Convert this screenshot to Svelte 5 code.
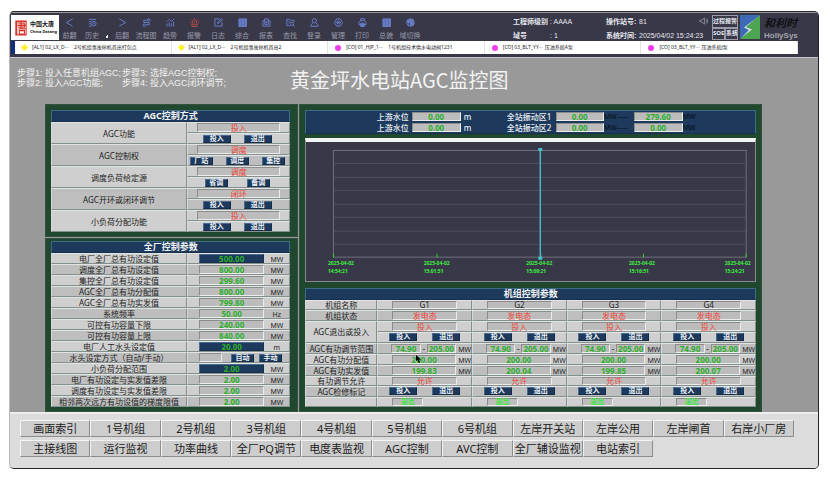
<script lang="ts">
	type Row = { label: string; value?: string; unit?: string; editable?: boolean };

	const navItems = [
		{ icon: 'prev', label: '前翻' },
		{ icon: 'history', label: '历史' },
		{ icon: 'next', label: '后翻' },
		{ icon: 'flow', label: '流程图' },
		{ icon: 'trend', label: '趋势' },
		{ icon: 'alarm', label: '报警' },
		{ icon: 'log', label: '日志' },
		{ icon: 'grid', label: '综合' },
		{ icon: 'report', label: '报表' },
		{ icon: 'find', label: '查找' },
		{ icon: 'user', label: '登录' },
		{ icon: 'manage', label: '管理' },
		{ icon: 'print', label: '打印' },
		{ icon: 'grid', label: '总貌' },
		{ icon: 'globe', label: '域切换' }
	];

	const alarms = [
		{ kind: 'diamond', tag: '[AL1] 02_LX_D···', text: '2号机组事故停机首出打包点' },
		{ kind: 'diamond', tag: '[AL1] 02_LX_D···', text: '2号机组事故停机首出2' },
		{ kind: 'dot', tag: '[CO] 01_HJP_1···', text: '1号机组技术供水电动阀1231' },
		{ kind: 'dot', tag: '[CO] 03_BLT_YY···', text: '压油系统A泵' },
		{ kind: 'dot', tag: '[CO] 03_BLT_YY···', text: '压油系统J泵' }
	];

	const modes = [
		{ label: 'AGC功能', state: '投入', actions: ['投入', '退出'] },
		{ label: 'AGC控制权', state: '调度', actions: ['厂站', '调度', '集控'] },
		{ label: '调度负荷给定源', state: '调度', actions: ['省调', '备调'] },
		{ label: 'AGC开环或闭环调节', state: '闭环', actions: ['投入', '退出'] },
		{ label: '小负荷分配功能', state: '投入', actions: ['投入', '退出'] }
	];

	const params: Row[] = [
		{ label: '电厂全厂总有功设定值', value: '500.00', unit: 'MW', editable: true },
		{ label: '调度全厂总有功设定值', value: '800.00', unit: 'MW' },
		{ label: '集控全厂总有功设定值', value: '299.60', unit: 'MW' },
		{ label: 'AGC全厂总有功分配值', value: '800.00', unit: 'MW' },
		{ label: 'AGC全厂总有功实发值', value: '799.80', unit: 'MW' },
		{ label: '系统频率', value: '50.00', unit: 'Hz' },
		{ label: '可控有功容量下限', value: '240.00', unit: 'MW' },
		{ label: '可控有功容量上限', value: '840.00', unit: 'MW' },
		{ label: '电厂人工水头设定值', value: '20.00', unit: 'm', editable: true },
		{ label: '水头设定方式（自动/手动）' },
		{ label: '小负荷分配范围', value: '2.00', unit: 'MW', editable: true },
		{ label: '电厂有功设定与实发值差限', value: '2.00', unit: 'MW' },
		{ label: '调度有功设定与实发值差限', value: '2.00', unit: 'MW' },
		{ label: '相邻两次远方有功设值的梯度限值', value: '2.00', unit: 'MW' }
	];

	const levels = [
		{ label: '上游水位', level: '0.00', zone: '全站振动区1', low: '0.00', high: '279.60' },
		{ label: '上游水位', level: '0.00', zone: '全站振动区2', low: '0.00', high: '0.00' }
	];

	const units = [
		{ name: 'G1', low: '74.90', high: '205.00', assigned: '200.00', actual: '199.83' },
		{ name: 'G2', low: '74.90', high: '205.00', assigned: '200.00', actual: '200.04' },
		{ name: 'G3', low: '74.90', high: '205.00', assigned: '200.00', actual: '199.85' },
		{ name: 'G4', low: '74.90', high: '205.00', assigned: '200.00', actual: '200.07' }
	];

	const ticks = [
		{ x: 27, label: 22, time: '14:54:21' },
		{ x: 131, label: 118, time: '15:01:51' },
		{ x: 235, label: 221, time: '15:09:21' },
		{ x: 338, label: 324, time: '15:16:51' },
		{ x: 441, label: 420, time: '15:24:21' }
	];
	const gridLines = [21, 35, 48, 62, 75, 89, 102];

	const pages = [
		['画面索引', '1号机组', '2号机组', '3号机组', '4号机组', '5号机组', '6号机组', '左岸开关站', '左岸公用', '左岸闸首', '右岸小厂房'],
		['主接线图', '运行监视', '功率曲线', '全厂PQ调节', '电度表监视', 'AGC控制', 'AVC控制', '全厂辅设监视', '电站索引']
	];
</script>

{#snippet icon(name: string)}
	<svg class="icon" class:red={name === 'alarm'} viewBox="0 0 10 10" aria-hidden="true">
		{#if name === 'prev'}
			<path d="M8.5 1 1.5 5l7 4" />
		{:else if name === 'next'}
			<path d="m1.500 1 7 4-7 4" />
		{:else if name === 'history'}
			<path d="M1 1.500h8M1 4h3M1 6.500h2.500M1 9h3" />
			<circle cx="6.500" cy="6.200" r="2.500" />
			<path d="M6.500 5v1.500h1" />
		{:else if name === 'flow'}
			<path d="M2 2.500h3.500M2 2.500v2.500h6V7.500H4.500" />
			<circle cx="7.500" cy="2.200" r="1.400" />
			<circle cx="2.500" cy="8" r="1.400" />
		{:else if name === 'trend'}
			<path d="M1 9.500V6M3.500 9.500V5M6 9.500V6M8.500 9.500V4M1 4l2.500-2.500L6 4l3-3" />
		{:else if name === 'alarm'}
			<path d="M2.500 7V4.500a2.500 2.500 0 0 1 5 0V7M1 7.500h8M2 9.500h6M5 0v1M1 1.500l1 1M9 1.500l-1 1M0 4.500h1M9 4.500h1M5 4v2" />
		{:else if name === 'log'}
			<path d="M6 1H1v8h8V5M4 6l.5-2L8.500.8l1 1L6 5.500z" />
		{:else if name === 'grid'}
			<path class="solid" d="M1 1h8.500v8.500H1z" />
			<path class="mesh" d="M3.900 1v8.500M6.700 1v8.500M1 3.900h8.500M1 6.700h8.500" />
		{:else if name === 'report'}
			<path d="M1 3v6h8V3H7.500M1 3h1.500M3 1h4v6H3zM4 3.500h2M4 5h2" />
		{:else if name === 'find'}
			<path d="M4 8.500H1v-7h3l1 1h4v2M2.500 4.500h2" />
			<circle cx="6.500" cy="6.500" r="1.900" />
			<path d="m8 8 1.500 1.500" />
		{:else if name === 'user'}
			<circle cx="5" cy="3" r="2.300" />
			<path d="M3.700 5.200 1 7.500v1.700h8V7.500L6.300 5.200" />
		{:else if name === 'manage'}
			<path d="M3 1h4l2.500 4L7 9H3L.5 5zM2.500 5h5" />
			<circle cx="5" cy="5" r="1.700" />
		{:else if name === 'print'}
			<path d="M3 3V.8h4V3M3 7.500H1V5l1.500-2h5L9 5v2.500H7" />
			<path class="solid" d="M3 6h4v3.500H3z" />
		{:else if name === 'globe'}
			<circle cx="5" cy="5" r="4.200" />
			<path d="M1 4.500h8M5 1v8M3 1.500C2 4 2.500 7 3.500 9M7 1.500C8 4 7.500 7 6.500 9" />
			<path class="solid" d="M2 2.500h5v2H2zM5 5.500h3.500v2H5z" />
		{/if}
	</svg>
{/snippet}

<div class="page">
	<div class="window">
		<header>
			<div class="top">
				<div class="brand">
					<svg viewBox="0 0 14 18" aria-hidden="true">
						<path d="M2 17V2h10M4 4h7v4H4M3 6h10M7 0v10M4 10h8M5 12h6v4H5zM1 1h12v16H1z" />
					</svg>
					<div class="brand-text">
						<strong>中国大唐</strong>
						<span>China Datang</span>
					</div>
				</div>
				<nav>
					{#each navItems as item, i}
						<button class="nav-item">
							{@render icon(item.icon)}
							<span>{item.label}</span>
						</button>
						{#if i === 1}
							<i class="corner"></i>
						{/if}
					{/each}
				</nav>
				<dl class="info level">
					<dt>工程师级别</dt>
					<dd>: AAAA</dd>
					<dt>域号</dt>
					<dd>: 1</dd>
				</dl>
				<dl class="info station">
					<dt>操作站号:</dt>
					<dd>81</dd>
					<dt>系统时间:</dt>
					<dd>2025/04/02 15:24:23</dd>
				</dl>
				<button class="speaker" aria-label="声音">
					<svg viewBox="0 0 10 8" aria-hidden="true"><path d="M1 3h2l3-2.500v7L3 5H1zM7.500 2.500c1 1 1 2 0 3M8.500 1c1.500 2 1.500 4 0 6" /></svg>
				</button>
				<div class="alarm-keys">
					<button>过程报警</button>
					<button>SOE</button>
					<button>系统</button>
				</div>
				<div class="vendor">
					<svg viewBox="0 0 20 24" preserveAspectRatio="none" aria-hidden="true">
						<path fill="#3b6bb5" d="M0 0h20L5 13l5 2-10 9z" />
						<path fill="#4da552" d="M20 0v24H0l11-10-5-2z" />
						<path fill="#d8e8e4" d="M19 1 6 12l6 2.500L1 23l8-8-5-2.500z" />
					</svg>
					<div class="vendor-text">
						<em>和利时</em>
						<strong>HollySys</strong>
					</div>
				</div>
			</div>
			<ul class="ticker">
				{#each alarms as alarm}
					<li>
						<i class={alarm.kind}></i>
						<span class="tag">{alarm.tag}</span>
						<span>{alarm.text}</span>
					</li>
				{/each}
			</ul>
		</header>

		<main>
			<div class="intro">
				<div class="steps">
					<span>步骤1: 投入任意机组AGC;</span>
					<span>步骤3: 选择AGC控制权;</span>
					<span>步骤2: 投入AGC功能;</span>
					<span>步骤4: 投入AGC闭环调节;</span>
				</div>
				<h1>黄金坪水电站AGC监控图</h1>
			</div>

			<div class="board">
				<div class="left">
					<section class="panel">
						<h2>AGC控制方式</h2>
						<table class="modes">
							<tbody>
								{#each modes as mode}
									<tr>
										<th rowspan="2" scope="rowgroup">{mode.label}</th>
										<td><div class="cell"><output class="field state">{mode.state}</output></div></td>
									</tr>
									<tr>
										<td>
											<div class="cell actions" class:wide={mode.actions[0] !== '投入' && mode.actions.length === 2}>
												{#each mode.actions as action}
													<button class="key" class:small={mode.actions[0] !== '投入'}>{action}</button>
												{/each}
											</div>
										</td>
									</tr>
								{/each}
							</tbody>
						</table>
					</section>

					<section class="panel">
						<h2>全厂控制参数</h2>
						<table class="params">
							<tbody>
								{#each params as row}
									<tr>
										<th scope="row">{row.label}</th>
										<td>
											<div class="cell">
												{#if row.editable}
													<input class="field value" aria-label={row.label} value={row.value} />
												{:else if row.value}
													<output class="field value">{row.value}</output>
												{:else}
													<output class="field blank"></output>
													<button class="key small">自动</button>
													<button class="key small">手动</button>
												{/if}
												{#if row.unit}
													<span class="unit">{row.unit}</span>
												{/if}
											</div>
										</td>
									</tr>
								{/each}
							</tbody>
						</table>
					</section>
				</div>

				<section class="panel right">
					<div class="levels">
						{#each levels as row}
							<span>{row.label}</span>
							<output class="field value">{row.level}</output>
							<span class="metre">m</span>
							<span>{row.zone}</span>
							<output class="field value">{row.low}</output>
							<span class="mw">MW-----</span>
							<output class="field value">{row.high}</output>
							<span class="mw">MW</span>
						{/each}
					</div>

					<svg class="chart" viewBox="0 0 450 139" role="img" aria-label="趋势图">
						<rect class="plot" x="27.500" y="8.500" width="414" height="107" />
						{#each gridLines as y}
							<path class="line" d="M28 {y + 0.5}h413" />
						{/each}
						{#each ticks as tick}
							<path class="tick" d="M{tick.x + 0.5} 112v4" />
							<text x={tick.label} y="123">2025-04-02</text>
							<text x={tick.label} y="131">{tick.time}</text>
						{/each}
						<path class="cursor" d="M235 7v110" />
						<path class="grip" d="M233 6h4v3h-4zM233 115h4v3h-4z" />
					</svg>

					<h2>机组控制参数</h2>
					<table class="units">
						<tbody>
							<tr>
								<th scope="row">机组名称</th>
								{#each units as unit}
									<td><div class="cell"><output class="field name">{unit.name}</output></div></td>
								{/each}
							</tr>
							<tr>
								<th scope="row">机组状态</th>
								{#each units as _}
									<td><div class="cell"><output class="field state">发电态</output></div></td>
								{/each}
							</tr>
							<tr>
								<th rowspan="2" scope="rowgroup">AGC退出或投入</th>
								{#each units as _}
									<td><div class="cell"><output class="field state">投入</output></div></td>
								{/each}
							</tr>
							<tr>
								{#each units as _}
									<td>
										<div class="cell actions">
											<button class="key">投入</button>
											<button class="key">退出</button>
										</div>
									</td>
								{/each}
							</tr>
							<tr>
								<th scope="row">AGC有功调节范围</th>
								{#each units as unit}
									<td>
										<div class="cell range">
											<output class="field value">{unit.low}</output>
											<span>-</span>
											<output class="field value">{unit.high}</output>
											<span class="unit">MW</span>
										</div>
									</td>
								{/each}
							</tr>
							<tr>
								<th scope="row">AGC有功分配值</th>
								{#each units as unit}
									<td><div class="cell measured"><output class="field value">{unit.assigned}</output><span class="unit">MW</span></div></td>
								{/each}
							</tr>
							<tr>
								<th scope="row">AGC有功实发值</th>
								{#each units as unit}
									<td><div class="cell measured"><output class="field value">{unit.actual}</output><span class="unit">MW</span></div></td>
								{/each}
							</tr>
							<tr>
								<th scope="row">有功调节允许</th>
								{#each units as _}
									<td><div class="cell"><output class="field state">允许</output></div></td>
								{/each}
							</tr>
							<tr>
								<th scope="row">AGC检修标记</th>
								{#each units as _}
									<td>
										<div class="cell actions">
											<button class="key">投入</button>
											<button class="key">退出</button>
										</div>
									</td>
								{/each}
							</tr>
							<tr>
								<th></th>
								{#each units as _}
									<td><div class="cell"><output class="field mark">退出</output></div></td>
								{/each}
							</tr>
						</tbody>
					</table>
					<svg class="pointer" viewBox="0 0 5 8" aria-hidden="true"><path d="M0 0v6l1.500-1L3 8l1-.5L3 4.500h2z" /></svg>
				</section>
			</div>
		</main>

		<footer>
			{#each pages as group}
				<div class="pages">
					{#each group as page}
						<button>{page}</button>
					{/each}
				</div>
			{/each}
		</footer>
	</div>
</div>

<style>
	:global(body) {
		margin: 0;
		background: #fff;
	}
	.page {
		padding: 11px 12px 8px 9px;
		font-family: 'Noto Sans', 'Noto Sans CJK SC', sans-serif;
		font-size: 8px;
		line-height: 9px;
		color: #222;
	}
	.page * {
		box-sizing: border-box;
	}
	button,
	input {
		margin: 0;
		padding: 0;
		border: 0;
		background: none;
		font: inherit;
		color: inherit;
		white-space: nowrap;
	}
	h1,
	h2,
	ul,
	dl,
	dd {
		margin: 0;
		padding: 0;
	}
	.window {
		border: 1px solid #24242a;
		border-left-color: #bbb;
		border-radius: 5px;
		overflow: hidden;
		background: #999;
	}

	/* header */
	header {
		background: #383848;
		border-top: 1px solid #999;
		padding: 2px 20px 3px 1px;
	}
	.top {
		display: flex;
		height: 25px;
		color: #e6e6ee;
		font-size: 7px;
	}
	.brand {
		display: flex;
		align-items: center;
		gap: 3px;
		width: 48px;
		padding-left: 4px;
		background: #fff;
		color: #111;
		overflow: hidden;
	}
	.brand svg {
		width: 12px;
		height: 18px;
		fill: none;
		stroke: #d9342b;
		stroke-width: 1.3;
	}
	.brand-text {
		display: flex;
		flex-direction: column;
		line-height: 7px;
		white-space: nowrap;
	}
	.brand-text strong {
		font-size: 6px;
	}
	.brand-text span {
		font-size: 4px;
		font-weight: bold;
	}
	nav {
		display: flex;
		flex: none;
	}
	.nav-item {
		display: flex;
		flex-direction: column;
		align-items: center;
		gap: 5px;
		width: 24px;
		padding-top: 3px;
		font-size: 7px;
		line-height: 8px;
		color: #9a9aaa;
	}
	.nav-item:first-child {
		width: 21px;
	}
	.icon {
		width: 9px;
		height: 9px;
		fill: none;
		stroke: #6a7cc8;
		stroke-width: 1.1;
	}
	.icon.red {
		stroke: #b84848;
	}
	.icon .solid {
		fill: #6a7cc8;
	}
	.icon .mesh {
		stroke: #5262a4;
		stroke-width: 0.5;
	}
	.corner {
		align-self: flex-end;
		width: 3px;
		height: 3px;
		margin: 0 2px 2px 1px;
		background: linear-gradient(135deg, transparent 50%, #eee 50%);
	}
	.info {
		display: grid;
		grid-template-rows: 12px 12px;
		row-gap: 2px;
		align-items: center;
		flex: none;
		font-family: 'Liberation Sans', 'Noto Sans CJK SC', sans-serif;
		white-space: nowrap;
	}
	.info dt {
		font-weight: bold;
	}
	.level {
		grid-template-columns: 37px 56px;
		margin-left: auto;
	}
	.station {
		grid-template-columns: 33px 60px;
	}
	.speaker {
		width: 9px;
		height: 12px;
		flex: none;
	}
	.speaker svg {
		display: block;
		width: 9px;
		height: 8px;
		fill: none;
		stroke: #a0a0b4;
		stroke-width: 0.8;
	}
	.alarm-keys {
		display: grid;
		grid-template-columns: 13px 13px;
		flex: none;
		margin-left: 4px;
		font-size: 6px;
		font-weight: bold;
	}
	.alarm-keys button {
		border: 1px solid #9a9aa8;
		overflow: hidden;
	}
	.alarm-keys button:first-child {
		grid-column: span 2;
	}
	.vendor {
		display: flex;
		flex: none;
		gap: 4px;
		margin-left: 2px;
	}
	.vendor svg {
		width: 20px;
		height: 24px;
	}
	.vendor-text {
		display: flex;
		flex-direction: column;
		justify-content: space-between;
		width: 34px;
		white-space: nowrap;
	}
	.vendor-text em {
		font-size: 11px;
		font-weight: bold;
		line-height: 15px;
		color: #101016;
	}
	.vendor-text strong {
		font-family: 'Liberation Sans', sans-serif;
		font-size: 8px;
		line-height: 8px;
		color: #a4a4ac;
	}
	.ticker {
		display: grid;
		grid-template-columns: repeat(5, 1fr);
		margin-top: 1px;
		border-left: 4px solid #12307c;
		background: #fff;
		list-style: none;
		font-size: 5px;
		line-height: 13px;
		color: #222;
	}
	.ticker li {
		display: flex;
		align-items: center;
		gap: 5px;
		padding-left: 7px;
		border-right: 1px solid #e2e2ea;
		white-space: nowrap;
	}
	.tag {
		width: 37px;
	}
	.diamond {
		width: 5px;
		height: 5px;
		background: #fff02a;
		transform: rotate(45deg);
	}
	.dot {
		width: 6px;
		height: 6px;
		border-radius: 50%;
		background: #f43cf0;
	}

	/* work area */
	main {
		border-top: 1px solid #c8c4cc;
	}
	.intro {
		display: flex;
		height: 46px;
		padding: 10px 7px 0;
		color: #f2f2f2;
	}
	.steps {
		display: grid;
		grid-template-columns: 105px 168px;
		grid-auto-rows: 10px;
		flex: none;
		font-family: 'Liberation Sans', 'Noto Sans CJK SC', sans-serif;
		font-size: 9px;
		line-height: 10px;
		white-space: nowrap;
	}
	h1 {
		font-family: 'Noto Sans CJK SC', sans-serif;
		font-size: 20px;
		font-weight: 400;
		line-height: 24px;
		white-space: nowrap;
	}
	.board {
		display: grid;
		grid-template-columns: 253fr 462fr;
		gap: 1px;
		margin: 0 56px 0 35px;
	}
	.left {
		display: grid;
		gap: 1px;
		align-content: start;
	}
	.panel {
		padding: 5px 7px 4px 5px;
		border: 1px solid #34503e;
		background: #20482f;
	}
	.left .panel + .panel {
		padding-top: 2px;
	}
	.right {
		position: relative;
		padding-right: 5px;
	}
	h2 {
		height: 12px;
		border: 1px solid #3e6a88;
		border-bottom-color: #183050;
		background: #1d3a5c;
		color: #f0f4f8;
		font-size: 9px;
		line-height: 10px;
		text-align: center;
	}
	table {
		width: 100%;
		table-layout: fixed;
		border-spacing: 0;
	}
	th,
	td {
		height: 11px;
		padding: 0;
		border: 1px solid #e2e4e4;
		border-right-color: #84908e;
		border-bottom-color: #84908e;
		border-left-color: #d8dada;
		background: #cfcfcf;
	}
	th {
		width: 136px;
		font-weight: 400;
		white-space: nowrap;
	}
	.params tr:nth-child(even) > *,
	.modes tr:nth-child(4n + 3) > *,
	.modes tr:nth-child(4n) > *,
	.units tr:nth-child(2) > *,
	.units tr:nth-child(5) > *,
	.units tr:nth-child(7) > *,
	.units tr:nth-child(9) > * {
		background: #bebebe;
	}
	.cell {
		display: flex;
		align-items: center;
		height: 9px;
		padding: 0 9px;
	}
	.field {
		flex: 1;
		min-width: 0;
		height: 9px;
		border: 1px solid #8c8c8c;
		border-right-color: #ececec;
		border-bottom-color: #ececec;
		background: #bcbcbc;
		line-height: 7px;
		text-align: center;
		white-space: nowrap;
	}
	.field.value {
		font-weight: bold;
		color: #2cae2c;
	}
	input.field {
		border-color: #4a6c90 #16304e #16304e #4a6c90;
		background: #1d3a5c;
	}
	.field.state {
		color: #f04438;
	}
	.key {
		flex: none;
		width: 28px;
		height: 8px;
		border: 1px solid #4a6c90;
		border-right-color: #142c48;
		border-bottom-color: #142c48;
		background: #1d3a5c;
		color: #eef2f8;
		font-size: 7px;
		font-weight: bold;
		line-height: 6px;
	}
	.key.small {
		width: 23px;
	}
	.actions {
		justify-content: center;
		gap: 13px;
		padding: 0 3px 0 0;
	}
	.actions.wide {
		gap: 19px;
	}
	.unit {
		padding-top: 2px;
		font-size: 7px;
	}
	.params .cell {
		padding: 0 0 0 11px;
	}
	.params .unit {
		width: 25px;
		text-align: center;
	}
	.params .blank {
		flex: none;
		width: 23px;
		margin-right: 9px;
	}
	.params .key + .key {
		margin-left: 5px;
	}

	/* water levels and vibration zones */
	.levels {
		display: grid;
		grid-template-columns: 35px 49px 46px 49px 48px 30px 49px 14px;
		grid-auto-rows: 10px;
		row-gap: 1px;
		justify-content: center;
		align-items: center;
		padding: 0 0 1px 12px;
		border: 1px solid #3e6a88;
		border-bottom-color: #183050;
		background: #1d3a5c;
		color: #e8eef4;
		font-weight: 500;
		white-space: nowrap;
	}
	.metre {
		padding-left: 3px;
	}
	.mw {
		font-size: 7px;
		color: #0a121c;
	}
	.chart {
		display: block;
		width: 100%;
		margin: 4px 0 6px;
		border: solid #8a8a8e;
		border-width: 0 1px 1px;
		border-top: 4px solid #f2f4f2;
		background: #383848;
		font-size: 5px;
		font-weight: bold;
	}
	.plot,
	.line {
		fill: none;
		stroke: #70707c;
	}
	.line {
		stroke: #4e4e5c;
	}
	.tick {
		stroke: #3cc83c;
	}
	.chart text {
		fill: #3ef03e;
	}
	.cursor {
		stroke: #48b8c4;
		stroke-width: 1.5;
	}
	.grip {
		fill: #48c0cc;
	}

	/* per-unit table */
	.units th {
		width: 72px;
	}
	.units .cell {
		padding: 0 14px;
	}
	.units .actions {
		gap: 15px;
		padding: 0;
	}
	.units .measured {
		padding-right: 0;
	}
	.units .unit {
		width: 15px;
		text-align: right;
	}
	.units .range {
		padding: 0 0 0 13px;
	}
	.range span:not(.unit) {
		width: 6px;
		text-align: center;
	}
	.units .mark {
		flex: none;
		width: 31px;
		color: #3ee63e;
		font-size: 7px;
		font-weight: bold;
	}
	.units tr:nth-child(1) > *,
	.units tr:nth-child(8) > *,
	.units tr:nth-child(10) > * {
		height: 10px;
		line-height: 8px;
	}
	.units tr:nth-child(1) .cell,
	.units tr:nth-child(8) .cell,
	.units tr:nth-child(10) .cell,
	.units tr:nth-child(1) .field,
	.units tr:nth-child(8) .field,
	.units tr:nth-child(10) .field {
		height: 8px;
		line-height: 6px;
	}
	/* mouse arrow resting over the G1 column */
	.pointer {
		position: absolute;
		left: 25%;
		bottom: 48px;
		width: 5px;
		height: 8px;
	}

	/* page switch buttons */
	footer {
		display: grid;
		gap: 3px;
		padding: 6px 24px 11px 10px;
		border-top: 2px solid #eee;
		background: #dcdcdc;
	}
	.pages {
		display: grid;
		grid-template-columns: repeat(11, 1fr);
	}
	.pages button {
		height: 17px;
		border: 1px solid #f4f4f4;
		border-right-color: #8c8c8c;
		border-bottom-color: #8c8c8c;
		background: #cdcdcd;
		color: #1c1c1c;
		font-size: 11px;
		line-height: 15px;
	}
</style>
